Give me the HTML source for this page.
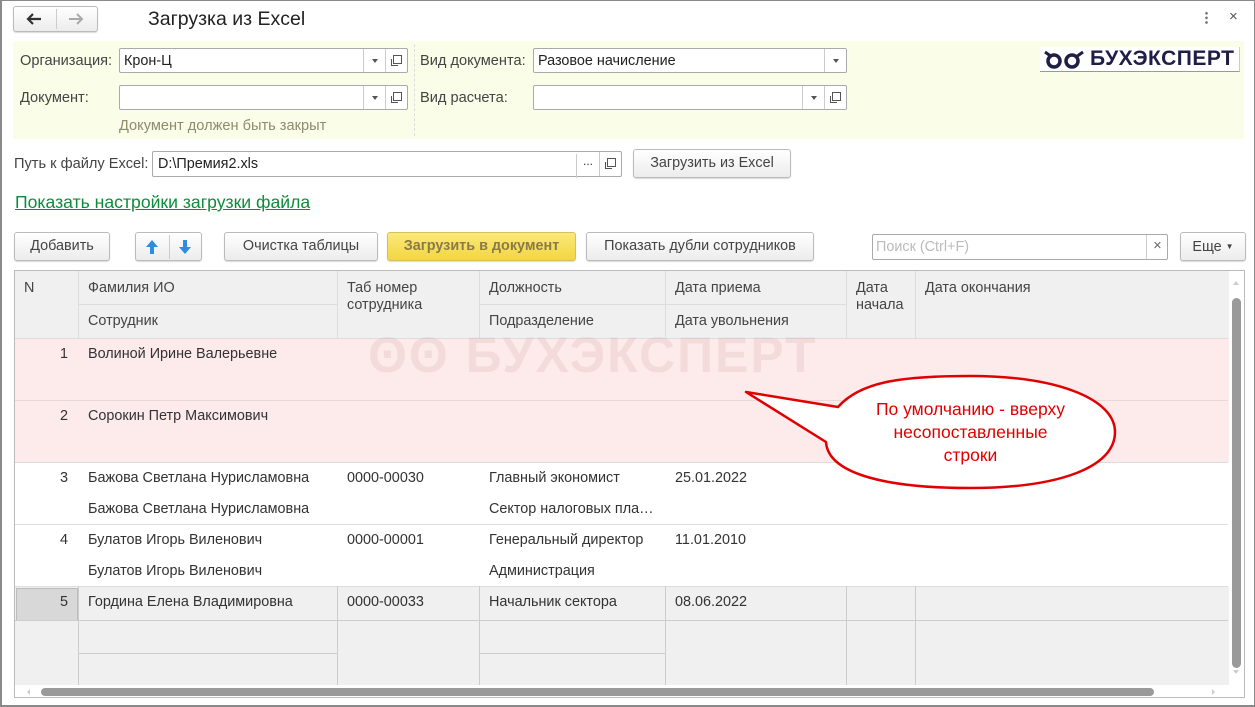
<!DOCTYPE html>
<html><head><meta charset="utf-8"><style>
*{box-sizing:border-box;margin:0;padding:0}
body{width:1255px;height:707px;background:#fff;font-family:"Liberation Sans",sans-serif;font-size:14.4px;color:#333;position:relative;overflow:hidden}
.a{position:absolute}
.win{left:0;top:0;width:1255px;height:707px;border:1px solid #8a8a8a;border-left:2px solid #8a8a8a;border-bottom:2px solid #8a8a8a}
.btn{position:absolute;border:1px solid #bbb;border-radius:3px;background:linear-gradient(#fff,#ececec);box-shadow:0 1px 1px rgba(0,0,0,.15);text-align:center;color:#444;font-size:14.4px}
.inp{position:absolute;border:1px solid #aaa;border-radius:2px;background:#fff;height:25px}
.dd,.op{position:absolute;top:0;height:23px;width:22px;border-left:1px solid #ccc}
.dd:after{content:"";position:absolute;left:8px;top:10px;border:3px solid transparent;border-top:4px solid #555}
.op:after{content:"";position:absolute;left:7px;top:6px;width:7px;height:7px;border:1px solid #555;box-shadow:-2px 2px 0 -1px #fff,-3px 3px 0 -1px #555}
.lbl{position:absolute;color:#444;font-size:14.6px}
.th{position:absolute;color:#444;font-size:14.4px}
.hl{position:absolute;background:#ddd}
.cell{position:absolute;font-size:14.4px;color:#333;white-space:nowrap}
</style></head><body>
<div class="a win"></div>
<div class="btn" style="left:13px;top:6px;width:85px;height:26px"><span class="a" style="left:42px;top:2px;width:1px;height:20px;background:#ccc"></span>
<svg class="a" style="left:12px;top:6px" width="16" height="12"><path d="M15 6H3M7 1L2 6l5 5" stroke="#333" stroke-width="2.2" fill="none"/></svg>
<svg class="a" style="left:54px;top:6px" width="16" height="12"><path d="M1 6h12M9 1l5 5-5 5" stroke="#aaa" stroke-width="2" fill="none"/></svg></div>
<div class="a" style="left:148px;top:8px;font-size:19.5px;color:#222">Загрузка из Excel</div>
<div class="a" style="left:1205px;top:11px;width:3px;height:14px;background:radial-gradient(circle,#777 1.2px,transparent 1.5px) 0 0/3px 4.6px"></div>
<div class="a" style="left:1229px;top:8px;font-size:15px;color:#555">×</div>

<div class="a" style="left:13px;top:41px;width:1231px;height:98px;background:#fafde7"></div>
<div class="a" style="left:414px;top:44px;height:92px;border-left:1px dashed #ddd"></div>
<div class="lbl" style="left:20px;top:53px">Организация:</div>
<div class="inp" style="left:119px;top:48px;width:289px"><span class="a" style="left:4px;top:4px;color:#222">Крон-Ц</span><div class="dd" style="left:243px"></div><div class="op" style="left:265px"></div></div>
<div class="lbl" style="left:20px;top:90px">Документ:</div>
<div class="inp" style="left:119px;top:85px;width:289px"><div class="dd" style="left:243px"></div><div class="op" style="left:265px"></div></div>
<div class="lbl" style="left:119px;top:118px;color:#8c8c6e">Документ должен быть закрыт</div>
<div class="lbl" style="left:420px;top:53px">Вид документа:</div>
<div class="inp" style="left:533px;top:48px;width:314px"><span class="a" style="left:4px;top:4px;color:#222">Разовое начисление</span><div class="dd" style="left:290px"></div></div>
<div class="lbl" style="left:420px;top:90px">Вид расчета:</div>
<div class="inp" style="left:533px;top:85px;width:314px"><div class="dd" style="left:268px"></div><div class="op" style="left:290px"></div></div>
<div class="a" style="left:1040px;top:47px;width:200px;height:25px;background:#fff;border-bottom:1px solid #999;border-right:1px solid #ccc"></div>
<svg class="a" style="left:1043px;top:50px" width="42" height="20"><g fill="none" stroke="#1e1e46" stroke-width="3.5"><circle cx="11" cy="11" r="6"/><circle cx="29" cy="11" r="6"/></g><path d="M2 2l7 5M40 2l-7 5" stroke="#1e1e46" stroke-width="3"/></svg>
<div class="a" style="left:1090px;top:47px;font-size:21px;font-weight:bold;color:#1e1e46;letter-spacing:0.5px">БУХЭКСПЕРТ</div>

<div class="lbl" style="left:14px;top:156px">Путь к файлу Excel:</div>
<div class="inp" style="left:152px;top:151px;width:470px;height:26px"><span class="a" style="left:5px;top:4px;color:#222">D:\Премия2.xls</span><div class="a" style="left:423px;top:0;height:24px;width:23px;border-left:1px solid #ccc;text-align:center;font-size:12px;top:2px">...</div><div class="op" style="left:446px;height:24px"></div></div>
<div class="btn" style="left:633px;top:149px;width:158px;height:29px;line-height:27px">Загрузить из Excel</div>
<div class="a" style="left:15px;top:192px;font-size:17.6px;color:#0c8c3a;text-decoration:underline">Показать настройки загрузки файла</div>

<div class="btn" style="left:14px;top:232px;width:96px;height:29px;line-height:27px">Добавить</div>
<div class="btn" style="left:135px;top:232px;width:67px;height:29px"><span class="a" style="left:33px;top:2px;width:1px;height:24px;background:#ccc"></span>
<svg class="a" style="left:9px;top:6px" width="14" height="16"><path d="M7 1L1 8h4v7h4V8h4z" fill="#2d8de0"/></svg>
<svg class="a" style="left:42px;top:6px" width="14" height="16"><path d="M7 15L1 8h4V1h4v7h4z" fill="#2d8de0"/></svg></div>
<div class="btn" style="left:224px;top:232px;width:154px;height:29px;line-height:27px">Очистка таблицы</div>
<div class="btn" style="left:387px;top:232px;width:189px;height:29px;line-height:27px;background:linear-gradient(#fbe97a,#f3d640);border-color:#d6c05a;color:#8a7a4a;font-weight:bold">Загрузить в документ</div>
<div class="btn" style="left:586px;top:232px;width:228px;height:29px;line-height:27px">Показать дубли сотрудников</div>
<div class="inp" style="left:872px;top:234px;width:296px;height:26px"><span class="a" style="left:3px;top:4px;color:#bbb">Поиск (Ctrl+F)</span><span class="a" style="left:273px;top:0;height:24px;width:22px;border-left:1px solid #ccc;text-align:center;color:#666;line-height:23px">×</span></div>
<div class="btn" style="left:1180px;top:232px;width:66px;height:29px;line-height:27px">Еще <span style="font-size:8px;vertical-align:2px">▼</span></div>

<div class="a" style="left:14px;top:270px;width:1231px;height:428px;border:1px solid #bbb;background:#fff;overflow:hidden">
<div class="a" style="left:0;top:0;width:1214px;height:68px;background:#f0f0f0"></div>
<div class="a" style="left:0;top:68px;width:1214px;height:124px;background:#fdeaea"></div>
<div class="a" style="left:0;top:316px;width:1214px;height:99px;background:#f0f0f0"></div>
<div class="a" style="left:1px;top:317px;width:62px;height:33px;background:#d8d8d8;border:1px solid #bbb"></div>
</div>
<div class="hl" style="left:78px;top:271px;width:1px;height:67px"></div>
<div class="hl" style="left:337px;top:271px;width:1px;height:67px"></div>
<div class="hl" style="left:479px;top:271px;width:1px;height:67px"></div>
<div class="hl" style="left:665px;top:271px;width:1px;height:67px"></div>
<div class="hl" style="left:846px;top:271px;width:1px;height:67px"></div>
<div class="hl" style="left:915px;top:271px;width:1px;height:67px"></div>
<div class="hl" style="left:78px;top:304px;width:259px;height:1px"></div>
<div class="hl" style="left:479px;top:304px;width:367px;height:1px"></div>
<div class="hl" style="left:15px;top:338px;width:1213px;height:1px"></div>
<div class="hl" style="left:15px;top:400px;width:1213px;height:1px;background:#e8d8d8"></div>
<div class="hl" style="left:15px;top:462px;width:1213px;height:1px"></div>
<div class="hl" style="left:15px;top:524px;width:1213px;height:1px"></div>
<div class="hl" style="left:15px;top:586px;width:1213px;height:1px"></div>
<div class="hl" style="left:15px;top:620px;width:1213px;height:1px;background:#ccc"></div>
<div class="hl" style="left:78px;top:653px;width:259px;height:1px;background:#ccc"></div>
<div class="hl" style="left:479px;top:653px;width:186px;height:1px;background:#ccc"></div>
<div class="hl" style="left:78px;top:586px;width:1px;height:99px;background:#ccc"></div>
<div class="hl" style="left:337px;top:586px;width:1px;height:99px;background:#ccc"></div>
<div class="hl" style="left:479px;top:586px;width:1px;height:99px;background:#ccc"></div>
<div class="hl" style="left:665px;top:586px;width:1px;height:99px;background:#ccc"></div>
<div class="hl" style="left:846px;top:586px;width:1px;height:99px;background:#ccc"></div>
<div class="hl" style="left:915px;top:586px;width:1px;height:99px;background:#ccc"></div>

<div class="th" style="left:24px;top:280px">N</div>
<div class="th" style="left:88px;top:280px">Фамилия ИО</div>
<div class="th" style="left:88px;top:313px">Сотрудник</div>
<div class="th" style="left:347px;top:280px;line-height:17px">Таб номер<br>сотрудника</div>
<div class="th" style="left:489px;top:280px">Должность</div>
<div class="th" style="left:489px;top:313px">Подразделение</div>
<div class="th" style="left:675px;top:280px">Дата приема</div>
<div class="th" style="left:675px;top:313px">Дата увольнения</div>
<div class="th" style="left:856px;top:280px;line-height:17px">Дата<br>начала</div>
<div class="th" style="left:925px;top:280px">Дата окончания</div>

<div class="a" style="left:368px;top:326px;font-size:50px;font-weight:bold;color:rgba(190,140,140,.16);letter-spacing:2px">ʘʘ БУХЭКСПЕРТ</div>

<div class="cell" style="left:60px;top:346px">1</div><div class="cell" style="left:88px;top:346px">Волиной Ирине Валерьевне</div>
<div class="cell" style="left:60px;top:408px">2</div><div class="cell" style="left:88px;top:408px">Сорокин Петр Максимович</div>
<div class="cell" style="left:60px;top:470px">3</div><div class="cell" style="left:88px;top:470px">Бажова Светлана Нурисламовна</div><div class="cell" style="left:347px;top:470px">0000-00030</div><div class="cell" style="left:489px;top:470px">Главный экономист</div><div class="cell" style="left:675px;top:470px">25.01.2022</div>
<div class="cell" style="left:88px;top:501px">Бажова Светлана Нурисламовна</div><div class="cell" style="left:489px;top:501px">Сектор налоговых пла…</div>
<div class="cell" style="left:60px;top:532px">4</div><div class="cell" style="left:88px;top:532px">Булатов Игорь Виленович</div><div class="cell" style="left:347px;top:532px">0000-00001</div><div class="cell" style="left:489px;top:532px">Генеральный директор</div><div class="cell" style="left:675px;top:532px">11.01.2010</div>
<div class="cell" style="left:88px;top:563px">Булатов Игорь Виленович</div><div class="cell" style="left:489px;top:563px">Администрация</div>
<div class="cell" style="left:60px;top:594px">5</div><div class="cell" style="left:88px;top:594px">Гордина Елена Владимировна</div><div class="cell" style="left:347px;top:594px">0000-00033</div><div class="cell" style="left:489px;top:594px">Начальник сектора</div><div class="cell" style="left:675px;top:594px">08.06.2022</div>

<div class="a" style="left:1229px;top:271px;width:15px;height:414px;background:#fff"></div>
<div class="a" style="left:1232px;top:298px;width:9px;height:370px;border-radius:5px;background:#9a9a9a"></div>
<div class="a" style="left:1233px;top:278px;border:3px solid transparent;border-bottom:4px solid #ccc"></div>
<div class="a" style="left:1233px;top:670px;border:3px solid transparent;border-top:4px solid #ccc"></div>
<div class="a" style="left:15px;top:685px;width:1229px;height:12px;background:#fff"></div>
<div class="a" style="left:41px;top:688px;width:1113px;height:8px;border-radius:4px;background:#9a9a9a"></div>
<div class="a" style="left:24px;top:689px;border:3px solid transparent;border-right:3px solid #ccc"></div>
<div class="a" style="left:1212px;top:689px;border:3px solid transparent;border-left:3px solid #ccc"></div>

<svg class="a" style="left:740px;top:370px" width="385" height="125">
<path d="M6 22 L98 37 C120 12 160 6 230 6 C320 6 375 30 375 62 C375 97 320 118 230 118 C140 118 88 102 86 72 L6 22 Z" fill="#fff" stroke="#e00000" stroke-width="2.5" stroke-linejoin="round"/>
</svg>
<div class="a" style="left:818px;top:398px;width:305px;text-align:center;color:#e00000;font-size:17.5px;line-height:23px">По умолчанию - вверху<br>несопоставленные<br>строки</div>
</body></html>
